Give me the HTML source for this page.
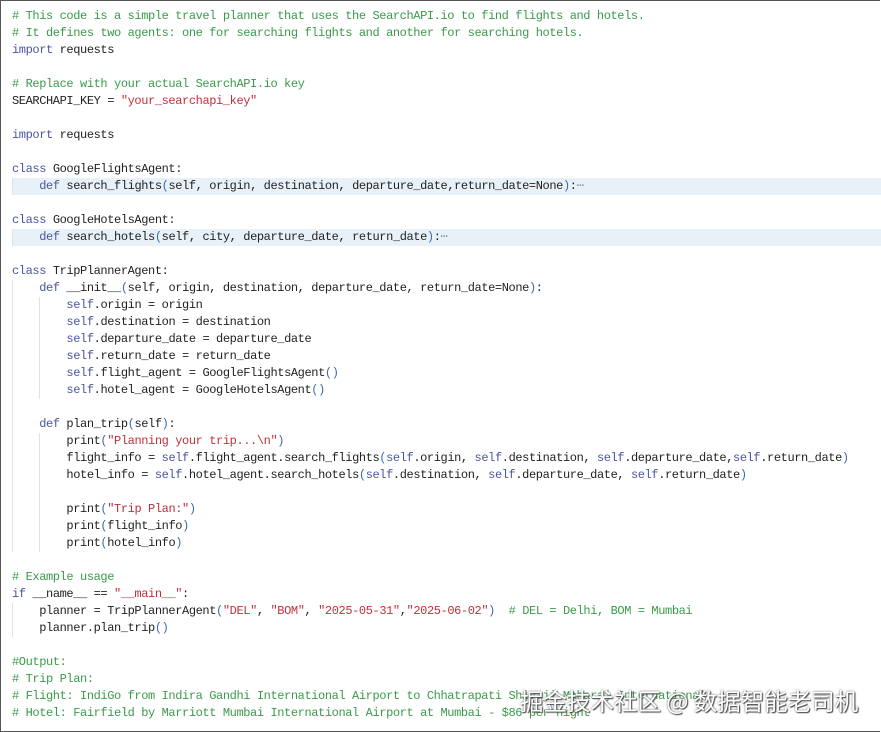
<!DOCTYPE html>
<html><head><meta charset="utf-8"><style>
html,body{margin:0;padding:0;background:#fff;}
body{width:881px;height:732px;position:relative;overflow:hidden;}
.frame{position:absolute;left:0;top:0;width:879px;height:730px;border:1px solid #555;border-right:none;}
pre{position:absolute;left:12px;top:8px;margin:0;font-family:"Liberation Mono",monospace;font-size:12px;letter-spacing:-0.4px;line-height:17px;color:#222;}
.c{color:#3a9a4a}.k{color:#4a55a0}.s{color:#c0303a}.p{color:#3a6ab0}.f{color:#999}
.hl{position:absolute;left:12px;right:0;height:17px;background:#e9f1f8;}
.g{position:absolute;width:1px;background:#e2e2e2;}
.wm{position:absolute;left:520px;top:683px;font-family:"Noto Sans CJK SC",sans-serif;font-size:23.5px;color:#fff;text-shadow:0 0 2px #555,1px 1px 1px #444;}
</style></head><body>
<div class="frame"></div>
<div class="hl" style="top:178px"></div>
<div class="hl" style="top:229px"></div>
<div class="g" style="left:12px;top:178px;height:17px"></div>
<div class="g" style="left:12px;top:229px;height:17px"></div>
<div class="g" style="left:12px;top:280px;height:272px"></div>
<div class="g" style="left:39px;top:297px;height:102px"></div>
<div class="g" style="left:39px;top:433px;height:119px"></div>
<div class="g" style="left:12px;top:603px;height:34px"></div>
<pre><span class="c"># This code is a simple travel planner that uses the SearchAPI.io to find flights and hotels.</span>
<span class="c"># It defines two agents: one for searching flights and another for searching hotels.</span>
<span class="k">import</span> requests

<span class="c"># Replace with your actual SearchAPI.io key</span>
SEARCHAPI_KEY = <span class="s">"your_searchapi_key"</span>

<span class="k">import</span> requests

<span class="k">class</span> GoogleFlightsAgent:
    <span class="k">def</span> search_flights<span class="p">(</span>self, origin, destination, departure_date,return_date=None<span class="p">)</span>:<span class="f">⋯</span>

<span class="k">class</span> GoogleHotelsAgent:
    <span class="k">def</span> search_hotels<span class="p">(</span>self, city, departure_date, return_date<span class="p">)</span>:<span class="f">⋯</span>

<span class="k">class</span> TripPlannerAgent:
    <span class="k">def</span> __init__<span class="p">(</span>self, origin, destination, departure_date, return_date=None<span class="p">)</span>:
        <span class="k">self</span>.origin = origin
        <span class="k">self</span>.destination = destination
        <span class="k">self</span>.departure_date = departure_date
        <span class="k">self</span>.return_date = return_date
        <span class="k">self</span>.flight_agent = GoogleFlightsAgent<span class="p">()</span>
        <span class="k">self</span>.hotel_agent = GoogleHotelsAgent<span class="p">()</span>

    <span class="k">def</span> plan_trip<span class="p">(</span>self<span class="p">)</span>:
        print<span class="p">(</span><span class="s">"Planning your trip...\n"</span><span class="p">)</span>
        flight_info = <span class="k">self</span>.flight_agent.search_flights<span class="p">(</span><span class="k">self</span>.origin, <span class="k">self</span>.destination, <span class="k">self</span>.departure_date,<span class="k">self</span>.return_date<span class="p">)</span>
        hotel_info = <span class="k">self</span>.hotel_agent.search_hotels<span class="p">(</span><span class="k">self</span>.destination, <span class="k">self</span>.departure_date, <span class="k">self</span>.return_date<span class="p">)</span>

        print<span class="p">(</span><span class="s">"Trip Plan:"</span><span class="p">)</span>
        print<span class="p">(</span>flight_info<span class="p">)</span>
        print<span class="p">(</span>hotel_info<span class="p">)</span>

<span class="c"># Example usage</span>
<span class="k">if</span> __name__ == <span class="s">"__main__"</span>:
    planner = TripPlannerAgent<span class="p">(</span><span class="s">"DEL"</span>, <span class="s">"BOM"</span>, <span class="s">"2025-05-31"</span>,<span class="s">"2025-06-02"</span><span class="p">)</span>  <span class="c"># DEL = Delhi, BOM = Mumbai</span>
    planner.plan_trip<span class="p">()</span>

<span class="c">#Output:</span>
<span class="c"># Trip Plan:</span>
<span class="c"># Flight: IndiGo from Indira Gandhi International Airport to Chhatrapati Shivaji Maharaj International</span>
<span class="c"># Hotel: Fairfield by Marriott Mumbai International Airport at Mumbai - $86 per night</span></pre>
<div class="wm">掘金技术社区 @ 数据智能老司机</div>
</body></html>
